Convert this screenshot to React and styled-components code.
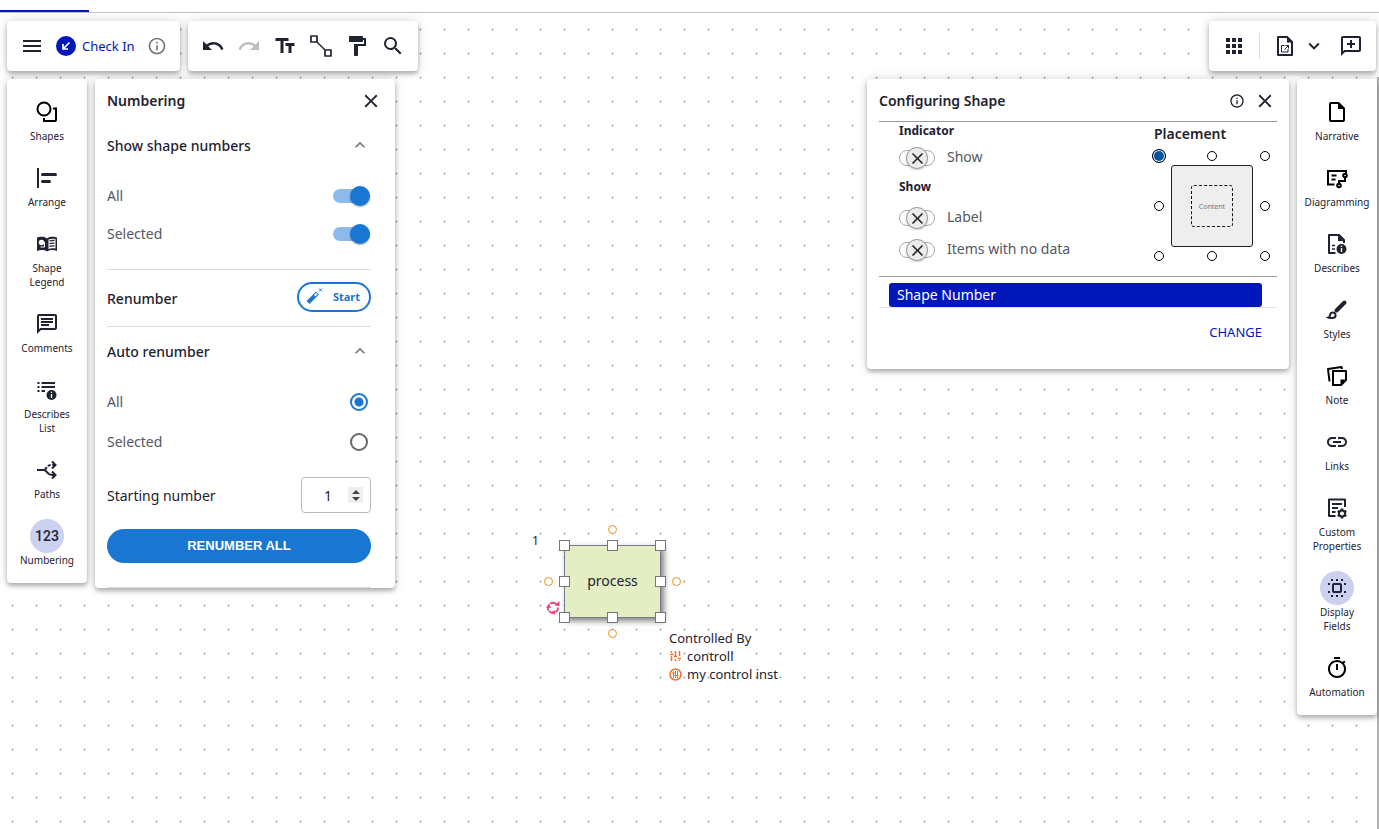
import React, { useState } from "react";
import styled, { createGlobalStyle, css } from "styled-components";
import {
  MdMenu,
  MdUndo,
  MdRedo,
  MdTextFields,
  MdFormatPaint,
  MdSearch,
  MdApps,
  MdExpandMore,
  MdExpandLess,
  MdOutlineInfo,
  MdClose,
  MdOutlineChat,
  MdOutlineInsertDriveFile,
  MdLink,
  MdOutlineTimer,
} from "react-icons/md";

const ink = "#1f2230";
const brand = "#0018bb";
const blue = "#1976d2";

const GlobalStyle = createGlobalStyle`
  *, *::before, *::after {
    box-sizing: border-box;
  }

  body {
    margin: 0;
    background: #fff;
    color: ${ink};
    font-family: "Noto Sans", "Open Sans", sans-serif;
    font-size: 14px;
  }

  button, input {
    font-family: inherit;
    color: inherit;
  }

  button {
    cursor: pointer;
  }
`;

const Page = styled.div`
  display: flex;
  flex-direction: column;
  min-height: 100vh;
`;

const TabStrip = styled.header`
  display: flex;
  align-items: flex-end;
  height: 13px;
  border-bottom: 1px solid #c1c1cc;
`;

const ActiveTab = styled.div`
  width: 89px;
  height: 2px;
  background: ${brand};
`;

const Workspace = styled.main`
  position: relative;
  flex: 1;
  overflow: hidden;
  background-image: url("data:image/svg+xml,%3Csvg xmlns='http://www.w3.org/2000/svg' width='24' height='24'%3E%3Cg fill='%23999' fill-opacity='.5'%3E%3Cpath d='M11 16h3v1h-3z'/%3E%3Cpath d='M12 15h1v3h-1z'/%3E%3C/g%3E%3C/svg%3E");
`;

const Overlay = styled.div`
  position: relative;
  display: flex;
  flex-direction: column;
  gap: 8px;
  padding: 8px 2px 0 7px;
`;

const Row = styled.div`
  display: flex;
  align-items: flex-start;
  gap: 8px;
`;

const ToolbarRow = styled(Row)`
  padding-right: 1px;
`;

const Spacer = styled.div`
  flex: 1;
`;

const Card = styled.section`
  background: #fff;
  border-radius: 4px;
  box-shadow: 0 3px 4px rgba(0, 0, 0, 0.26), 0 0 12px rgba(0, 0, 0, 0.15);
`;

const Toolbar = styled(Card)`
  display: flex;
  align-items: center;
  height: 50px;
  padding: 0 7px;
`;

const IconButton = styled.button`
  display: flex;
  align-items: center;
  justify-content: center;
  width: ${(p) => p.$width || 36}px;
  height: 36px;
  padding: 0;
  border: 0;
  background: none;
  color: ${(p) => p.$color || ink};
`;

const CheckInButton = styled.button`
  display: flex;
  align-items: center;
  gap: 6px;
  padding: 0 6px;
  border: 0;
  background: none;
  color: ${brand};
  font-size: 13px;
  line-height: 20px;
`;

const ToolbarDivider = styled.div`
  width: 1px;
  height: 26px;
  margin: 0 7px;
  background: #dcdcdf;
`;

const ToolbarGap = styled.div`
  width: 8px;
`;

const SideNav = styled(Card).attrs({ as: "nav" })`
  display: flex;
  flex-direction: column;
  gap: 18px;
  width: 80px;
  padding: 16px 0;
`;

const NavButton = styled.button`
  display: flex;
  flex-direction: column;
  align-items: center;
  padding: 0 14px;
  border: 0;
  background: none;
  font-size: 10px;
  line-height: 14px;
  color: ${ink};
`;

const NavLabel = styled.span`
  display: flex;
  justify-content: center;
  text-align: center;
`;

const NavIcon = styled.span`
  display: flex;
  align-items: center;
  justify-content: center;
  width: 34px;
  height: 34px;
  border-radius: 50%;
  font-family: Roboto, sans-serif;
  font-size: 14px;
  font-weight: 500;
  background: ${(p) => (p.$active ? "#ccd0f1" : "transparent")};
`;

const Panel = styled(Card)`
  width: ${(p) => p.$width}px;
`;

const PanelHeader = styled.header`
  display: flex;
  align-items: center;
  gap: 4px;
  height: 42px;
  padding: 2px 12px 0;
`;

const PanelTitle = styled.h2`
  flex: 1;
  margin: 0;
  font-size: 14px;
  font-weight: 600;
  line-height: 20px;
`;

const HeaderButton = styled(IconButton)`
  width: 24px;
  height: 24px;
`;

const PanelBody = styled.div`
  padding: 0 24px 0 12px;
`;

const PanelSection = styled.div`
  padding: 2px 0 ${(p) => p.$bottom}px;
  border-bottom: 1px solid #dcdcdf;
`;

const SectionToggle = styled.button`
  display: flex;
  align-items: center;
  justify-content: space-between;
  width: 100%;
  height: 46px;
  margin-bottom: 8px;
  padding: 0 1px 2px 0;
  border: 0;
  background: none;
  font-size: 14px;
  font-weight: 500;

  svg {
    color: #757575;
  }
`;

const OptionList = styled.div`
  display: flex;
  flex-direction: column;
  gap: ${(p) => p.$gap || 0}px;
`;

const Option = styled.label`
  display: flex;
  align-items: center;
  justify-content: space-between;
  height: 38px;
  color: #555761;
  line-height: 20px;
`;

const Switch = styled.input.attrs({ type: "checkbox" })`
  appearance: none;
  display: flex;
  align-items: center;
  width: 37px;
  height: 14px;
  margin: 0 1px 0 0;
  border-radius: 7px;
  background: #bdbdbd;

  &::before {
    content: "";
    width: 20px;
    height: 20px;
    border-radius: 50%;
    background: #fafafa;
    box-shadow: 0 1px 2px rgba(0, 0, 0, 0.35);
  }

  &:checked {
    justify-content: flex-end;
    background: #8cbaea;
  }

  &:checked::before {
    background: ${blue};
  }
`;

const Radio = styled.input.attrs({ type: "radio" })`
  appearance: none;
  width: 18px;
  height: 18px;
  margin: 0 3px 0 0;
  border: 2px solid #666;
  border-radius: 50%;

  &:checked {
    border-color: ${blue};
    background: radial-gradient(circle, ${blue} 4px, transparent 5px);
  }
`;

const RenumberRow = styled.div`
  display: flex;
  align-items: center;
  justify-content: space-between;
  height: 57px;
  border-bottom: 1px solid #dcdcdf;
  font-weight: 500;
`;

const StartButton = styled.button`
  display: flex;
  align-items: center;
  justify-content: space-between;
  width: 74px;
  height: 30px;
  margin-bottom: 3px;
  padding: 0 9px 1px 7px;
  border: 2px solid ${blue};
  border-radius: 15px;
  background: #fff;
  color: ${blue};
  font-size: 11px;
  font-weight: 700;
`;

const NumberField = styled.div`
  display: flex;
  align-items: center;
  width: 70px;
  height: 36px;
  padding: 0 7px 0 16px;
  border: 1px solid #b9b9bd;
  border-radius: 4px;
`;

const NumberInput = styled.input.attrs({ type: "number" })`
  flex: 1;
  min-width: 0;
  padding: 0 6px;
  border: 0;
  outline: 0;
  background: none;
  font-size: 14px;
  appearance: textfield;

  &::-webkit-inner-spin-button {
    display: none;
  }
`;

const Stepper = styled.div`
  display: flex;
  flex-direction: column;
  width: 15px;
  height: 16px;
  padding: 1px 0;
  background: #efefef;
`;

const StepButton = styled.button`
  display: flex;
  flex: 1;
  align-items: center;
  justify-content: center;
  padding: 0;
  border: 0;
  background: none;
`;

const StartingRow = styled.div`
  display: flex;
  align-items: center;
  justify-content: space-between;
  margin: 16px 0;
`;

const PrimaryButton = styled.button`
  width: 100%;
  height: 34px;
  padding: 0 0 2px;
  border: 0;
  border-radius: 17px;
  background: ${blue};
  color: #fff;
  font-family: "Liberation Sans", Arial, sans-serif;
  font-size: 13px;
  font-weight: 700;
`;

const ConfigBody = styled.div`
  padding: 0 12px;
`;

const ConfigGrid = styled.div`
  display: flex;
  justify-content: space-between;
  height: 156px;
  padding: 0 5px 0 20px;
  border-top: 1px solid #999;
  border-bottom: 1px solid #999;
`;

const GroupTitle = styled.h3`
  margin: 0 0 ${(p) => p.$gap}px;
  font-size: 12px;
  font-weight: 700;
  line-height: 18px;
`;

const Group = styled.div`
  margin-bottom: 4px;
`;

const ToggleOption = styled.label`
  display: flex;
  align-items: center;
  gap: 12px;
  height: 32px;
  color: #555761;
`;

const ToggleText = styled.span`
  padding-bottom: 3px;
`;

const ToggleTrack = styled.span`
  position: relative;
  display: flex;
  align-items: center;
  justify-content: center;
  width: 36px;
  height: 16px;
  border: 1px solid #aaa;
  border-radius: 8px;

  input {
    position: absolute;
    inset: 0;
    margin: 0;
    opacity: 0;
  }
`;

const ToggleKnob = styled.span`
  display: flex;
  flex: none;
  align-items: center;
  justify-content: center;
  width: 22px;
  height: 22px;
  border: 1px solid #999;
  border-radius: 50%;
  background: #ececec;
  color: #222;
  box-shadow: 0 1px 2px rgba(0, 0, 0, 0.2);
`;

const PlacementTitle = styled.h3`
  margin: 2px 0 5px 2px;
  font-size: 14px;
  font-weight: 600;
  line-height: 20px;
`;

const PlacementGrid = styled.div`
  display: grid;
  grid-template-columns: 14px 82px 14px;
  grid-template-rows: 14px 82px 14px;
  gap: 2px 5px;
  align-items: center;
  justify-items: center;
`;

const PlacementRadio = styled.input.attrs({ type: "radio" })`
  appearance: none;
  width: 10px;
  height: 10px;
  margin: 0;
  border: 1px solid #000;
  border-radius: 50%;
  background: #fff;

  &:checked {
    width: 14px;
    height: 14px;
    background: #00559f;
    box-shadow: inset 0 0 0 1px #fff;
  }
`;

const ShapePreview = styled.div`
  display: flex;
  align-items: center;
  justify-content: center;
  width: 82px;
  height: 82px;
  border: 1px solid #222;
  border-radius: 3px;
  background: #eee;
`;

const ContentPreview = styled.div`
  display: flex;
  align-items: center;
  justify-content: center;
  width: 42px;
  height: 42px;
  border: 1px dashed #111;
  border-radius: 3px;
  color: #777;
  font-size: 7px;
`;

const FieldList = styled.ul`
  margin: 0;
  padding: 6px 15px 0 10px;
  border-bottom: 1px solid #e4e4e8;
  list-style: none;
`;

const FieldItem = styled.li`
  height: 24px;
  padding: 0 8px;
  border-radius: 3px;
  background: ${brand};
  color: #fff;
  line-height: 24px;
`;

const ConfigFooter = styled.div`
  display: flex;
  justify-content: flex-end;
  padding: 13px 15px 26px;
`;

const TextButton = styled.button`
  height: 22px;
  padding: 0;
  border: 0;
  background: none;
  color: ${brand};
  font-size: 13px;
`;

const EdgeBar = styled.div`
  position: absolute;
  top: 64px;
  right: 0;
  bottom: 0;
  width: 2px;
  background: #b4b4b4;
`;

// everything below sits on the free canvas
const place = css`
  position: absolute;
  left: ${(p) => p.$x}px;
  top: ${(p) => p.$y}px;
`;

const ProcessShape = styled.div`
  ${place}
  display: flex;
  align-items: center;
  justify-content: center;
  width: 97px;
  height: 73px;
  padding-bottom: 2px;
  border: 1px solid #777a8c;
  background: #e3eec4;
  box-shadow: 3px 3px 6px rgba(0, 0, 0, 0.5);
`;

const Handle = styled.span`
  ${place}
  width: 11px;
  height: 11px;
  border: 1px solid #777;
  background: #fff;
`;

const Connector = styled.span`
  ${place}
  width: 9px;
  height: 9px;
  border: 1px solid #f08c1a;
  border-radius: 50%;
  background: #fff;
`;

const ShapeIndex = styled.span`
  ${place}
  font-size: 12px;
  line-height: 16px;
`;

const LoopBadge = styled.span`
  ${place}
  display: flex;
`;

const Annotation = styled.div`
  ${place}
  font-size: 13px;
  line-height: 18px;
`;

const AnnotationItem = styled.div`
  display: flex;
  align-items: center;
  gap: 5px;
`;

const Svg = ({ size = 24, children, ...rest }) => (
  <svg width={size} height={size} viewBox="0 0 24 24" fill="none" aria-hidden="true" {...rest}>
    {children}
  </svg>
);

const stroke = { stroke: "currentColor", strokeWidth: 2, fill: "none" };

const CheckInIcon = () => (
  <Svg size={20} viewBox="0 0 20 20">
    <circle cx="10" cy="10" r="10" fill={brand} />
    <path d="M13.500 6.500L8 12M7 8v5h5" stroke="#fff" strokeWidth="1.700" />
  </Svg>
);

const ConnectorIcon = () => (
  <Svg>
    <path d="M2 2h6v6H2zM16 16h6v6h-6z" stroke="currentColor" strokeWidth="1.700" strokeLinejoin="round" />
    <path d="M8 8l8 8" stroke="currentColor" strokeWidth="1.500" />
  </Svg>
);

const ExportIcon = () => (
  <Svg>
    <path d="M5 3h9l5 5v13H5z" {...stroke} strokeLinejoin="round" />
    <path d="M14 2l6 6.500h-6z" fill="currentColor" />
    <path d="M11.500 11.500H8.500v6.500h6.500v-3M12.500 11.500h3v3M15.500 11.500l-4 4" stroke="currentColor" />
  </Svg>
);

const AddCommentIcon = () => (
  <Svg>
    <path
      fill="currentColor"
      d="M20 2H4c-1.100 0-2 .9-2 2v18l4-4h14c1.100 0 2-.9 2-2V4c0-1.100-.9-2-2-2zm0 14H5.200L4 17.200V4h16v12zM11 14h2v-3h3V9h-3V6h-2v3H8v2h3z"
    />
  </Svg>
);

const ShapesIcon = () => (
  <Svg color="#000">
    <circle cx="9" cy="9" r="6.500" {...stroke} />
    <path d="M18 8.500h3V20a1 1 0 0 1-1 1H9v-3" {...stroke} />
  </Svg>
);

const ArrangeIcon = () => (
  <Svg>
    <path d="M3 2v20" {...stroke} />
    <path d="M7.500 8.500h13M7.500 15.500h7" {...stroke} strokeWidth="3" strokeLinecap="round" />
  </Svg>
);

const LegendIcon = () => (
  <Svg>
    <path
      fill="currentColor"
      d="M12 6.500C10.500 5.200 8.500 4.800 6.500 4.800S3 5 2 5.800V19c1.500-.7 3-1 4.500-1 2 0 4 .4 5.500 1.500 1.500-1.100 3.500-1.500 5.500-1.500 1.500 0 3 .3 4.500 1V5.800c-1-.8-2.500-1-4.500-1s-4 .4-5.500 1.700z"
    />
    <circle cx="6.500" cy="10.500" r="2.800" fill="#fff" />
    <path d="M9.500 10v5h-4" stroke="#fff" strokeWidth="1" />
    <path d="M13.500 7.500c2-1 4.500-1 7-.5v9.500c-2.500-.5-5-.3-7 .5z" fill="#fff" />
    <path
      d="M14.500 9c1.500-.6 3-.7 5-.5M14.500 11.700c1.500-.6 3-.7 5-.5M14.500 14.400c1.500-.6 3-.7 5-.5"
      stroke="currentColor"
      strokeWidth="1.300"
    />
  </Svg>
);

const InfoDot = () => (
  <>
    <circle cx="16.500" cy="17" r="5" fill="currentColor" />
    <path d="M16.500 13.800v1.300M16.500 16v4" stroke="#fff" strokeWidth="1.300" />
  </>
);

const DescribesListIcon = () => (
  <Svg>
    <path d="M2.500 5h2M2.500 9h2M2.500 13h2M6.500 5H20M6.500 9H20M6.500 13H10" {...stroke} />
    <InfoDot />
  </Svg>
);

const PathsIcon = () => (
  <Svg>
    <path d="M2 12h7c3 0 3 5 8 5h3M17 13.500l3.500 3.500-3.500 3.500" {...stroke} />
    <path d="M10 11.500c1.500-1.500 2.500-4.500 6-4.500h4" {...stroke} strokeDasharray="3 1.500" />
    <path d="M17 3.500L20.500 7 17 10.500" {...stroke} />
  </Svg>
);

const DiagrammingIcon = () => (
  <Svg color="#000">
    <path d="M9.500 18.500H3V5h18v2.500M6.500 9.500h5M6.500 13.500h4" {...stroke} />
    <circle cx="20" cy="9.500" r="1.800" {...stroke} />
    <circle cx="14" cy="19.500" r="1.800" {...stroke} />
    <path d="M20 11.500V15h-6v3" {...stroke} />
  </Svg>
);

const DescribesIcon = () => (
  <Svg>
    <path d="M10.500 21H4V3h10l5 5v3" {...stroke} strokeLinejoin="round" />
    <path d="M13 3v6h6z" fill="currentColor" />
    <path d="M7 13.500h3M7 17h3" {...stroke} strokeWidth="1.500" />
    <InfoDot />
  </Svg>
);

const BrushIcon = () => (
  <Svg>
    <path d="M11.500 12.500L19.500 4.500" stroke="currentColor" strokeWidth="4" strokeLinecap="round" />
    <path d="M3.500 19.500c1.500-.5 1.500-1.500 1.700-2.700a2.700 2.700 0 1 1 3.100 3c-1.500.3-3.200.3-4.800-.3z" {...stroke} />
  </Svg>
);

const NoteIcon = () => (
  <Svg color="#000">
    <path d="M8 7h13v9l-5 5H8z" {...stroke} strokeLinejoin="round" />
    <path d="M21 15.500h-5.500V21z" fill="currentColor" />
    <path d="M4.500 17.500L3 5l13.500-2 .5 2" {...stroke} strokeLinejoin="round" />
  </Svg>
);

const CustomPropertiesIcon = () => (
  <Svg>
    <path d="M10.500 20H4V3.500h16V11M7 8h10M7 12h6M7 16h3.500" {...stroke} strokeLinejoin="round" />
    <circle cx="17" cy="17.500" r="3" {...stroke} />
    <path
      d="M17 12.500v2M17 20.500v2M12.700 15l1.700 1M19.600 19l1.700 1M12.700 20l1.700-1M19.600 16l1.700-1"
      {...stroke}
      strokeWidth="2.500"
    />
  </Svg>
);

const DisplayFieldsIcon = () => (
  <Svg>
    <rect x="8" y="8" width="8" height="8" rx="1" {...stroke} />
    <path
      fill="currentColor"
      d="M6 3h2v2H6zM11 3h2v2h-2zM16 3h2v2h-2zM6 19h2v2H6zM11 19h2v2h-2zM16 19h2v2h-2zM3 7h2v2H3zM3 15h2v2H3zM19 7h2v2h-2zM19 15h2v2h-2z"
    />
  </Svg>
);

const WandIcon = () => (
  <Svg size={18} viewBox="0 0 18 18">
    <path d="M2 15.500L9 8.500" stroke="currentColor" strokeWidth="4" />
    <path d="M8.500 9l3-3" stroke="currentColor" strokeWidth="4" />
    <path d="M8.700 8.800l2.200-2.200" stroke="#fff" strokeWidth="2" />
    <path d="M13 1.500l3 3M16 1.500l-3 3" stroke="currentColor" />
  </Svg>
);

const LoopIcon = () => (
  <Svg size={14} viewBox="0 0 14 14">
    <path
      d="M2.600 9.500A5 5 0 0 1 2.500 5.500M4 2.900a5 5 0 0 1 6.500.4M12 6.500a5 5 0 0 1-2 4.500M7 12a5 5 0 0 1-4-2"
      stroke="#ec407a"
      strokeWidth="1.800"
    />
    <path d="M0 6.500L5 7 3 2.500zM8.500 4.500l5 .5V0zM9.500 9l-.5 5L5.500 11z" fill="#ec407a" />
  </Svg>
);

const ControlIcon = () => (
  <Svg size={13} viewBox="0 0 13 13">
    <path
      d="M2.500 1v2M1 4.500h3.500M2.500 6v5M6.500 1v5M5 6.500h3M6.500 9v2M10.500 1v5M9 8.500h3M10.500 10v1"
      stroke="#f4702c"
      strokeWidth="1.500"
    />
  </Svg>
);

const ControlInstanceIcon = () => (
  <Svg size={13} viewBox="0 0 13 13">
    <circle cx="6.500" cy="6.500" r="5.500" stroke="#f4702c" strokeWidth="1.500" />
    <path d="M4.500 3v7M6.500 3v7M8.500 3v7M3 5h3M5.500 7.500h4" stroke="#f4702c" />
  </Svg>
);

const leftItems = [
  { id: "shapes", label: "Shapes", icon: <ShapesIcon /> },
  { id: "arrange", label: "Arrange", icon: <ArrangeIcon /> },
  { id: "legend", label: "Shape Legend", icon: <LegendIcon /> },
  { id: "comments", label: "Comments", icon: <MdOutlineChat size={24} /> },
  { id: "describes", label: "Describes List", icon: <DescribesListIcon /> },
  { id: "paths", label: "Paths", icon: <PathsIcon /> },
  { id: "numbering", label: "Numbering", icon: "123", active: true },
];

const rightItems = [
  { id: "narrative", label: "Narrative", icon: <MdOutlineInsertDriveFile size={24} color="#000" /> },
  { id: "diagramming", label: "Diagramming", icon: <DiagrammingIcon /> },
  { id: "describes", label: "Describes", icon: <DescribesIcon /> },
  { id: "styles", label: "Styles", icon: <BrushIcon /> },
  { id: "note", label: "Note", icon: <NoteIcon /> },
  { id: "links", label: "Links", icon: <MdLink size={24} /> },
  { id: "custom", label: "Custom Properties", icon: <CustomPropertiesIcon /> },
  { id: "fields", label: "Display Fields", icon: <DisplayFieldsIcon />, active: true },
  { id: "automation", label: "Automation", icon: <MdOutlineTimer size={24} color="#000" /> },
];

const handles = [
  [559, 527],
  [607, 527],
  [655, 527],
  [559, 563],
  [655, 563],
  [559, 599],
  [607, 599],
  [655, 599],
];

const connectors = [
  [608, 512],
  [544, 564],
  [672, 564],
  [608, 616],
];

const SideBar = ({ items, label }) => (
  <SideNav aria-label={label}>
    {items.map((item) => (
      <NavButton key={item.id}>
        <NavIcon $active={item.active}>{item.icon}</NavIcon>
        <NavLabel>{item.label}</NavLabel>
      </NavButton>
    ))}
  </SideNav>
);

const Diagram = () => (
  <>
    <ShapeIndex $x={532} $y={520}>1</ShapeIndex>
    <ProcessShape $x={564} $y={532}>process</ProcessShape>
    {handles.map(([x, y]) => (
      <Handle key={`${x}-${y}`} $x={x} $y={y} />
    ))}
    {connectors.map(([x, y]) => (
      <Connector key={`${x}-${y}`} $x={x} $y={y} />
    ))}
    <LoopBadge $x={546} $y={588}>
      <LoopIcon />
    </LoopBadge>
    <Annotation $x={669} $y={616}>
      <div>Controlled By</div>
      <AnnotationItem>
        <ControlIcon />
        controll
      </AnnotationItem>
      <AnnotationItem>
        <ControlInstanceIcon />
        my control inst
      </AnnotationItem>
    </Annotation>
  </>
);

const NumberingPanel = () => {
  const [scope, setScope] = useState("all");
  const [start, setStart] = useState(1);

  return (
    <Panel $width={300}>
      <PanelHeader>
        <PanelTitle>Numbering</PanelTitle>
        <HeaderButton aria-label="Close">
          <MdClose size={22} />
        </HeaderButton>
      </PanelHeader>
      <PanelBody>
        <PanelSection $bottom={16}>
          <SectionToggle>
            Show shape numbers
            <MdExpandLess size={20} />
          </SectionToggle>
          <OptionList>
            <Option>
              All
              <Switch defaultChecked />
            </Option>
            <Option>
              Selected
              <Switch defaultChecked />
            </Option>
          </OptionList>
        </PanelSection>
        <RenumberRow>
          Renumber
          <StartButton>
            <WandIcon />
            Start
          </StartButton>
        </RenumberRow>
        <PanelSection $bottom={24}>
          <SectionToggle>
            Auto renumber
            <MdExpandLess size={20} />
          </SectionToggle>
          <OptionList $gap={2}>
            <Option>
              All
              <Radio name="scope" checked={scope === "all"} onChange={() => setScope("all")} />
            </Option>
            <Option>
              Selected
              <Radio name="scope" checked={scope === "selected"} onChange={() => setScope("selected")} />
            </Option>
          </OptionList>
          <StartingRow>
            <label htmlFor="starting-number">Starting number</label>
            <NumberField>
              <NumberInput id="starting-number" value={start} onChange={(e) => setStart(Number(e.target.value))} />
              <Stepper>
                <StepButton aria-label="Increase" onClick={() => setStart(start + 1)}>
                  <svg width="8" height="4" viewBox="0 0 8 4">
                    <path d="M0 4l4-4 4 4z" fill="#444" />
                  </svg>
                </StepButton>
                <StepButton aria-label="Decrease" onClick={() => setStart(start - 1)}>
                  <svg width="8" height="4" viewBox="0 0 8 4">
                    <path d="M0 0l4 4 4-4z" fill="#444" />
                  </svg>
                </StepButton>
              </Stepper>
            </NumberField>
          </StartingRow>
          <PrimaryButton>RENUMBER ALL</PrimaryButton>
        </PanelSection>
      </PanelBody>
    </Panel>
  );
};

const Toggle = ({ label }) => (
  <ToggleOption>
    <ToggleTrack>
      <input type="checkbox" />
      <ToggleKnob>
        <MdClose size={19} />
      </ToggleKnob>
    </ToggleTrack>
    <ToggleText>{label}</ToggleText>
  </ToggleOption>
);

const PlacementPicker = () => {
  const [position, setPosition] = useState(0);

  return (
    <div>
      <PlacementTitle>Placement</PlacementTitle>
      <PlacementGrid>
        {[0, 1, 2, 3, 4, 5, 6, 7, 8].map((i) =>
          i === 4 ? (
            <ShapePreview key={i}>
              <ContentPreview>Content</ContentPreview>
            </ShapePreview>
          ) : (
            <PlacementRadio
              key={i}
              name="placement"
              aria-label={`Position ${i + 1}`}
              checked={position === i}
              onChange={() => setPosition(i)}
            />
          )
        )}
      </PlacementGrid>
    </div>
  );
};

const ConfigPanel = () => (
  <Panel $width={422}>
    <PanelHeader>
      <PanelTitle>Configuring Shape</PanelTitle>
      <HeaderButton aria-label="Help">
        <MdOutlineInfo size={16} />
      </HeaderButton>
      <HeaderButton aria-label="Close">
        <MdClose size={22} />
      </HeaderButton>
    </PanelHeader>
    <ConfigBody>
      <ConfigGrid>
        <div>
          <Group>
            <GroupTitle $gap={2}>Indicator</GroupTitle>
            <Toggle label="Show" />
          </Group>
          <Group>
            <GroupTitle $gap={6}>Show</GroupTitle>
            <Toggle label="Label" />
            <Toggle label="Items with no data" />
          </Group>
        </div>
        <PlacementPicker />
      </ConfigGrid>
      <FieldList>
        <FieldItem>Shape Number</FieldItem>
      </FieldList>
      <ConfigFooter>
        <TextButton>CHANGE</TextButton>
      </ConfigFooter>
    </ConfigBody>
  </Panel>
);

const App = () => (
  <Page>
    <GlobalStyle />
    <TabStrip>
      <ActiveTab />
    </TabStrip>
    <Workspace>
      <Diagram />
      <EdgeBar />
      <Overlay>
        <ToolbarRow>
          <Toolbar>
            <IconButton aria-label="Menu">
              <MdMenu size={24} />
            </IconButton>
            <CheckInButton>
              <CheckInIcon />
              Check In
            </CheckInButton>
            <IconButton aria-label="Info" $color="#777" $width={32}>
              <MdOutlineInfo size={20} />
            </IconButton>
          </Toolbar>
          <Toolbar>
            <IconButton aria-label="Undo">
              <MdUndo size={24} />
            </IconButton>
            <IconButton aria-label="Redo" $color="#bdbdbd">
              <MdRedo size={24} />
            </IconButton>
            <IconButton aria-label="Text">
              <MdTextFields size={24} />
            </IconButton>
            <IconButton aria-label="Connector">
              <ConnectorIcon />
            </IconButton>
            <IconButton aria-label="Format painter">
              <MdFormatPaint size={24} />
            </IconButton>
            <IconButton aria-label="Search">
              <MdSearch size={24} />
            </IconButton>
          </Toolbar>
          <Spacer />
          <Toolbar>
            <IconButton aria-label="Apps">
              <MdApps size={24} />
            </IconButton>
            <ToolbarDivider />
            <IconButton aria-label="Open document">
              <ExportIcon />
            </IconButton>
            <IconButton aria-label="More" $width={22}>
              <MdExpandMore size={22} />
            </IconButton>
            <ToolbarGap />
            <IconButton aria-label="Add comment">
              <AddCommentIcon />
            </IconButton>
          </Toolbar>
        </ToolbarRow>
        <Row>
          <SideBar items={leftItems} label="Diagram tools" />
          <NumberingPanel />
          <Spacer />
          <ConfigPanel />
          <SideBar items={rightItems} label="Shape tools" />
        </Row>
      </Overlay>
    </Workspace>
  </Page>
);

export default App;
